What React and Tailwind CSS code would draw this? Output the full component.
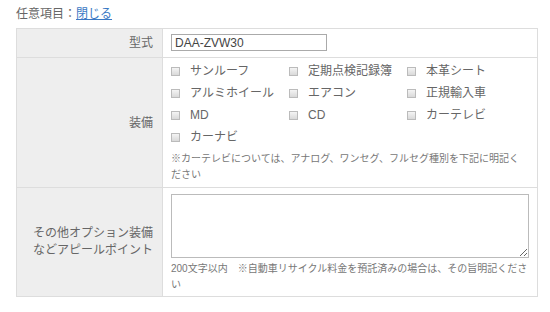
import React from 'react';

const options = [
  'サンルーフ',
  '定期点検記録簿',
  '本革シート',
  'アルミホイール',
  'エアコン',
  '正規輸入車',
  'MD',
  'CD',
  'カーテレビ',
  'カーナビ',
];

const App = () => {
  return (
    <div
      className="w-[550px] h-[312px] bg-white px-4 pt-[5px] text-[#666]"
      style={{ fontFamily: '"Liberation Sans", "Noto Sans CJK JP", sans-serif' }}
    >
      {/* Header */}
      <div className="text-[12px] leading-[18px] mb-[5px]">
        任意項目：<a href="#" className="text-[#3b78c4] underline">閉じる</a>
      </div>

      {/* Form table */}
      <div className="w-[522px] border border-[#dddddd] grid grid-cols-[146px_1fr]">
        {/* 型式 */}
        <div className="bg-[#eeeeee] border-r border-b border-[#dddddd] flex items-center justify-end pr-[9px] text-[12px]">
          型式
        </div>
        <div className="border-b border-[#dddddd] pl-2 pt-[5px] pb-[6px]">
          <input
            type="text"
            defaultValue="DAA-ZVW30"
            className="block w-[156px] h-[17px] border border-[#aaaaaa] px-[3px] text-[12px] leading-[15px] text-[#444] outline-none"
          />
        </div>

        {/* 装備 */}
        <div className="bg-[#eeeeee] border-r border-b border-[#dddddd] flex items-center justify-end pr-[9px] text-[12px]">
          装備
        </div>
        <div className="border-b border-[#dddddd] pl-2 pt-[2px] pb-[4px]">
          <div className="grid grid-cols-[118px_118px_118px]">
            {options.map((o) => (
              <label key={o} className="h-[22px] flex items-center gap-[10px] text-[12px]">
                <input
                  type="checkbox"
                  className="appearance-none w-[9px] h-[9px] border border-[#bbbbbb] bg-gradient-to-b from-[#f4f4f4] to-[#d9d9d9]"
                />
                <span>{o}</span>
              </label>
            ))}
          </div>
          <p className="mt-[3px] w-[353px] text-[10px] leading-[16px] text-[#777]">
            ※カーテレビについては、アナログ、ワンセグ、フルセグ種別を下記に明記ください
          </p>
        </div>

        {/* その他 */}
        <div className="bg-[#eeeeee] border-r border-[#dddddd] flex items-center justify-end pr-[9px] text-[12px] leading-[17px] text-right">
          その他オプション装備
          <br />
          などアピールポイント
        </div>
        <div className="pl-2 pt-[6px] pb-[3px]">
          <textarea className="block w-[358px] h-[64px] border border-[#bbbbbb] text-[12px] outline-none" />
          <p className="mt-[3px] w-[362px] text-[10px] leading-[16px] text-[#777]">
            200文字以内　※自動車リサイクル料金を預託済みの場合は、その旨明記ください
          </p>
        </div>
      </div>
    </div>
  );
};

export default App;
